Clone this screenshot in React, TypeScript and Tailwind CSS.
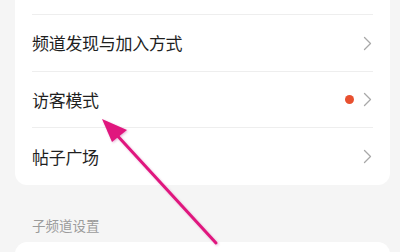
import React from "react";

const Chevron = () => (
  <svg width="9" height="15" viewBox="0 0 9 15" fill="none">
    <path d="M1.5 1.5 L7.5 7.5 L1.5 13.5" stroke="#a8a8a8" strokeWidth="1.3" strokeLinecap="round" strokeLinejoin="round" />
  </svg>
);

const Row = ({ label, dot, h, border }: { label: string; dot?: boolean; h: string; border?: boolean }) => (
  <div className={`flex items-center justify-between ${h} ${border ? "border-b border-[#eeeeee]" : ""}`}>
    <span className="text-[17px] text-[#1f1f1f] tracking-[-0.3px]">{label}</span>
    <div className="flex items-center gap-[9px] pr-[1px]">
      {dot && <span className="block w-[9px] h-[9px] rounded-full bg-[#e8502f]" />}
      <Chevron />
    </div>
  </div>
);

export default function App() {
  return (
    <div
      className="relative w-[400px] h-[252px] overflow-hidden bg-[#f5f5f5]"
      style={{ fontFamily: '"Noto Sans CJK SC", "Noto Sans", sans-serif' }}
    >
      <div className="ml-[15px] mr-[10px] bg-white rounded-b-[12px]">
        <div className="mx-[17px]">
          <div className="h-[15px] border-b border-[#eeeeee]" />
          <Row label="频道发现与加入方式" h="h-[57px]" border />
          <Row label="访客模式" dot h="h-[56px]" border />
          <Row label="帖子广场" h="h-[57px]" />
        </div>
      </div>
      <div className="pl-[32px] pt-[30px] h-[57px] text-[13.5px] leading-[20px] text-[#9b9b9b]">子频道设置</div>
      <div className="ml-[15px] mr-[10px] h-[40px] bg-white rounded-t-[12px]" />
      <svg className="absolute left-0 top-0" width="400" height="252" viewBox="0 0 400 252">
        <defs>
          <filter id="sh" x="-20%" y="-20%" width="140%" height="140%">
            <feDropShadow dx="1" dy="1" stdDeviation="1.2" floodColor="#b0308a" floodOpacity="0.35" />
          </filter>
        </defs>
        <g filter="url(#sh)">
          <line x1="216" y1="243" x2="114" y2="132" stroke="#e0157e" strokeWidth="3" strokeLinecap="round" />
          <polygon points="102,119 127,130 112,142" fill="#e0157e" />
        </g>
      </svg>
    </div>
  );
}
